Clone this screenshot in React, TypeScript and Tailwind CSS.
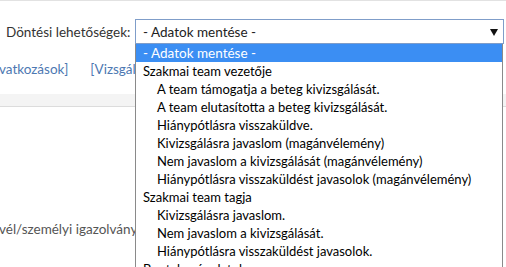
import React from "react";

const options: { label: string; group?: boolean; selected?: boolean }[] = [
  { label: "- Adatok mentése -", selected: true },
  { label: "Szakmai team vezetője", group: true },
  { label: "A team támogatja a beteg kivizsgálását." },
  { label: "A team elutasította a beteg kivizsgálását." },
  { label: "Hiánypótlásra visszaküldve." },
  { label: "Kivizsgálásra javaslom (magánvélemény)" },
  { label: "Nem javaslom a kivizsgálását (magánvélemény)" },
  { label: "Hiánypótlásra visszaküldést javasolok (magánvélemény)" },
  { label: "Szakmai team tagja", group: true },
  { label: "Kivizsgálásra javaslom." },
  { label: "Nem javaslom a kivizsgálását." },
  { label: "Hiánypótlásra visszaküldést javasolok." },
  { label: "Bontakozó adatok", group: true },
];

export default function App() {
  return (
    <div className="relative w-[506px] h-[267px] overflow-hidden bg-white text-[13.5px] text-[#333] font-['Lato','Open_Sans',sans-serif]">
      <div className="h-px bg-[#e2e2e2]" />
      <div className="flex items-center h-[25px] mt-[18px]">
        <div className="w-[135px] pl-[6px] whitespace-nowrap leading-[18px]">Döntési lehetőségek:</div>
        <div className="w-[369px] h-[25px] border border-[#7f9dc9] flex items-center justify-between pl-[7px] pr-[5px] text-[#222]">
          <span className="leading-[18px]">- Adatok mentése -</span>
          <svg width="8" height="7" viewBox="0 0 8 7" className="mt-[1px]">
            <polygon points="0,0 8,0 4,7" fill="#111" />
          </svg>
        </div>
      </div>
      <div className="flex h-[18px] mt-[16px] leading-[18px] text-[#4d78b2] whitespace-nowrap">
        <span className="ml-[-1px]">vatkozások]</span>
        <span className="ml-[22px]">[Vizsgálatok]</span>
      </div>
      <div className="h-[13px] mt-[16px] bg-[#f4f4f4] border-b border-[#dcdcdc]" />
      <div className="mt-[113px] h-[18px] leading-[18px] text-[#555] whitespace-nowrap">
        <span className="ml-[-1px]">vél/személyi igazolvány</span>
      </div>

      <div className="absolute left-[135px] top-[44px] w-[368px] bg-white border-x border-b border-[#8a8a8a] text-black text-[13px]">
        {options.map((o, i) => (
          <div
            key={i}
            className={
              "h-[18px] leading-[18px] whitespace-nowrap " +
              (o.selected
                ? "bg-[#3b8ef3] text-white pl-[7px] text-[13.5px]"
                : o.group
                ? "pl-[7px]"
                : "pl-[21px]")
            }
          >
            {o.label}
          </div>
        ))}
      </div>
    </div>
  );
}
